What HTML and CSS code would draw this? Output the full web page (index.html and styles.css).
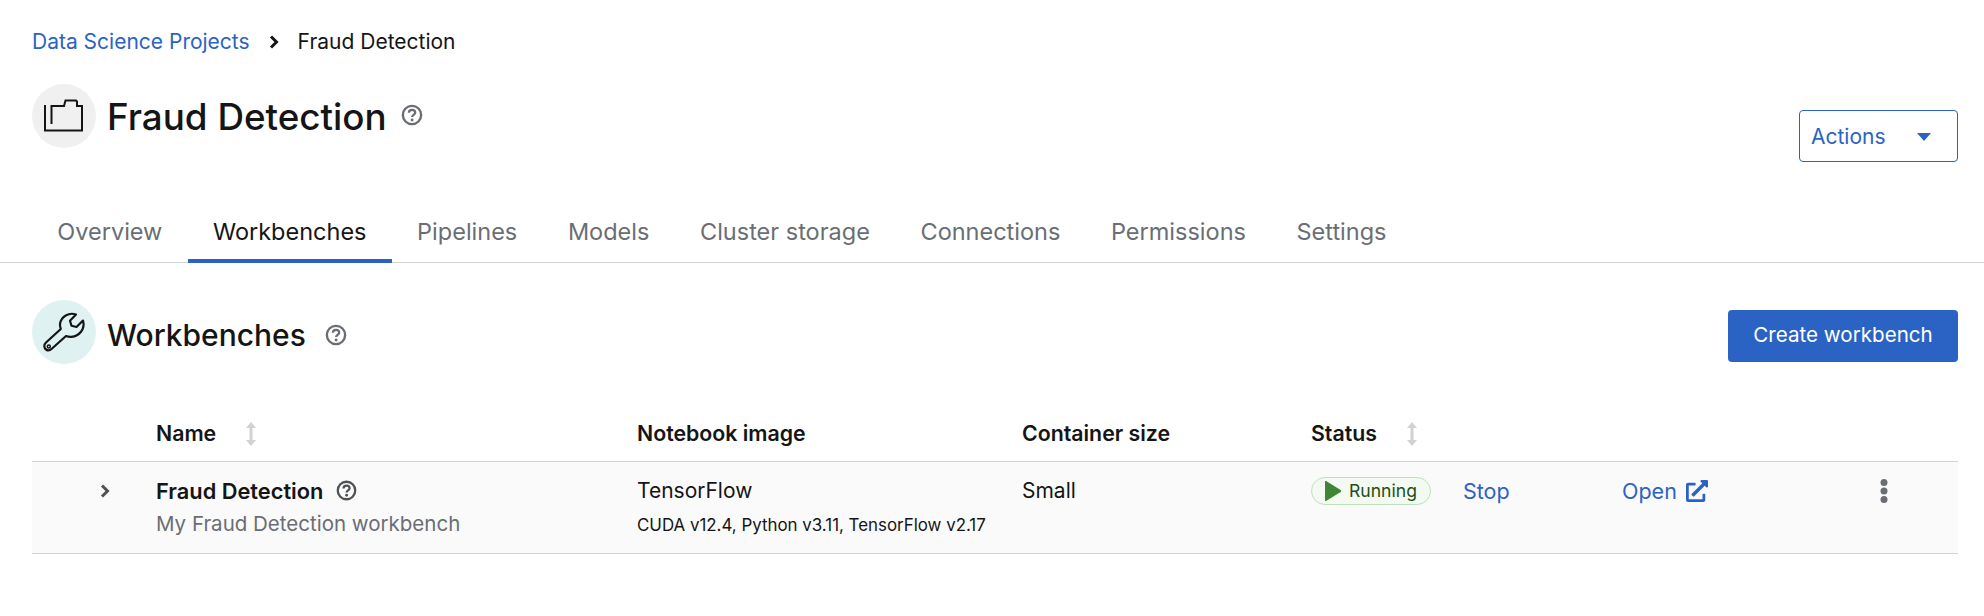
FILE: index.html
```html
<!DOCTYPE html>
<html lang="en">
<head>
<meta charset="utf-8">
<title>Fraud Detection</title>
<link rel="stylesheet" href="styles.css">
</head>
<body>
<svg class="sprite" width="0" height="0">
  <symbol id="help" viewBox="0 0 24 24"><circle cx="12" cy="12" r="10" fill="none" stroke="currentColor" stroke-width="2.6"/><path d="M8.600 9.600c0-2 1.500-3.200 3.500-3.200s3.400 1.200 3.400 2.900c0 2.600-3.400 2.600-3.400 5" fill="none" stroke="currentColor" stroke-width="2.500"/><circle cx="12.100" cy="17.400" r="1.600" fill="currentColor"/></symbol>
  <symbol id="sort" viewBox="0 0 12 24"><path d="M6 0l5 6H7.500v12H11l-5 6-5-6h3.500V6H1z" fill="currentColor"/></symbol>
  <symbol id="chev" viewBox="0 0 12 14"><path d="M3 1.500L8.500 7 3 12.500" fill="none" stroke="currentColor" stroke-width="3"/></symbol>
</svg>
<nav class="crumbs"><a class="link" href="#">Data Science Projects</a><svg class="crumb-sep"><use href="#chev"/></svg><span>Fraud Detection</span></nav>
<header class="page-head">
  <div class="title-row">
    <span class="disc disc-grey">
      <svg class="disc-icon" viewBox="0 0 64 64"><path d="M13 21V46.500H50V22H45V17.500L44 16.500H33.500L32 22H19.500V40" fill="none" stroke="#151515" stroke-width="2"/></svg>
    </span>
    <h1 class="page-title">Fraud Detection</h1>
    <svg class="help help-title"><use href="#help"/></svg>
  </div>
  <button class="btn-actions">Actions<svg class="caret" viewBox="0 0 14 8"><path d="M0 0h14L7 8z" fill="currentColor"/></svg></button>
</header>
<div class="tabs">
  <a class="tab">Overview</a><a class="tab tab-on">Workbenches</a><a class="tab">Pipelines</a><a class="tab">Models</a><a class="tab">Cluster storage</a><a class="tab">Connections</a><a class="tab">Permissions</a><a class="tab">Settings</a>
</div>
<section class="section">
  <div class="section-head">
    <div class="title-row">
      <span class="disc disc-teal">
        <svg class="disc-icon" viewBox="0 0 64 64"><path d="M44 14.500C37 12 29 16.500 28 24c-.2 1.800.2 3.500.8 5L14 42.500c-2.500 2.200-2 5.500 0 7s4 1 5.500-.5L34 36c2 .8 3.800 1 5.500.8C47 36 53.500 29.500 51 20.500L44.500 27l-5-1.300-1.500-5z" fill="none" stroke="#151515" stroke-width="2.200" stroke-linejoin="round"/><circle cx="16.800" cy="46.500" r="1.500" fill="none" stroke="#151515" stroke-width="1.500"/></svg>
      </span>
      <h2 class="section-title">Workbenches</h2>
      <svg class="help help-section"><use href="#help"/></svg>
    </div>
    <button class="btn-create">Create workbench</button>
  </div>
  <table class="grid">
    <colgroup><col class="c-exp"><col class="c-name"><col class="c-image"><col class="c-size"><col class="c-status"><col class="c-stop"><col class="c-open"><col></colgroup>
    <thead>
      <tr>
        <th></th>
        <th><span class="th-in">Name<svg class="sort"><use href="#sort"/></svg></span></th>
        <th>Notebook image</th>
        <th>Container size</th>
        <th><span class="th-in">Status<svg class="sort"><use href="#sort"/></svg></span></th>
        <th></th><th></th><th></th>
      </tr>
    </thead>
    <tbody>
      <tr>
        <td class="exp"><svg class="chev"><use href="#chev"/></svg></td>
        <td>
          <div class="wb-name">Fraud Detection<svg class="help help-row"><use href="#help"/></svg></div>
          <div class="wb-desc">My Fraud Detection workbench</div>
        </td>
        <td>
          <div>TensorFlow</div>
          <div class="img-meta">CUDA v12.4, Python v3.11, TensorFlow v2.17</div>
        </td>
        <td>Small</td>
        <td><span class="badge"><svg class="play" viewBox="0 0 16 20"><path d="M0 1v18a1 1 0 0 0 1.500.8L16 10.800a1 1 0 0 0 0-1.600L1.500.2A1 1 0 0 0 0 1z" fill="currentColor"/></svg><span class="badge-text">Running</span></span></td>
        <td><a class="link action" href="#">Stop</a></td>
        <td><a class="link action open" href="#">Open<svg class="ext" viewBox="0 0 512 512"><path fill="currentColor" d="M432 320h-32a16 16 0 0 0-16 16v112H64V128h144a16 16 0 0 0 16-16V80a16 16 0 0 0-16-16H48A48 48 0 0 0 0 112v352a48 48 0 0 0 48 48h352a48 48 0 0 0 48-48V336a16 16 0 0 0-16-16zM488 0H360c-21.370 0-32.050 25.910-17 41l35.730 35.730L135 320.370a24 24 0 0 0 0 34L157.670 377a24 24 0 0 0 34 0l243.610-243.680L471 169c15 15 41 4.500 41-17V24a24 24 0 0 0-24-24z"/></svg></a></td>
        <td class="kebab-cell"><svg class="kebab" viewBox="0 0 8 24"><circle cx="4" cy="3.500" r="3.500"/><circle cx="4" cy="12" r="3.500"/><circle cx="4" cy="20.500" r="3.500"/></svg></td>
      </tr>
    </tbody>
  </table>
</section>
</body>
</html>
```
FILE: styles.css
```css
* { box-sizing: border-box; }
html, body { margin: 0; padding: 0; }
body { font-family: "Inter", "Liberation Sans", sans-serif; font-size: 21px; line-height: 1.3; color: #151515; background: #fff; }
.sprite { position: absolute; }
.link { color: #2b63c4; text-decoration: none; }
.crumbs { display: flex; align-items: center; height: 30px; margin: 27px 0 0 32px; font-size: 21px; }
.crumb-sep { width: 12px; height: 14px; margin: 0 18px 0 18px; color: #151515; }
.page-head { display: flex; justify-content: space-between; align-items: flex-start; padding: 27px 26px 0 32px; height: 154px; }
.title-row { display: flex; align-items: center; }
.disc { display: flex; align-items: center; justify-content: center; width: 64px; height: 64px; border-radius: 50%; flex: none; }
.disc-grey { background: #f0f0f0; }
.disc-teal { background: #dff2f1; }
.disc-icon { width: 64px; height: 64px; }
.page-title { margin: 2px 0 0 11px; font-size: 36.800px; font-weight: 500; line-height: 1.2; }
.section-title { margin: 6px 0 0 11px; font-size: 30px; font-weight: 500; line-height: 1.2; }
.help { color: #6a6e73; flex: none; }
.help-title { width: 22px; height: 22px; margin: -2px 0 0 14px; }
.help-section { width: 22px; height: 22px; margin: 5px 0 0 19px; }
.help-row { width: 21px; height: 21px; margin-left: 13px; color: #4f5255; }
.btn-actions { display: flex; align-items: center; justify-content: space-between; width: 159px; height: 52px; margin-top: 26px; padding: 2px 26px 0 11px; font: inherit; color: #2b63c4; background: #fff; border: 1px solid #2b63c4; border-radius: 4px; }
.caret { width: 14px; height: 8px; }
.tabs { display: flex; height: 54px; padding-left: 32px; border-bottom: 1px solid #d2d2d2; margin-top: -2px; }
.tab { display: flex; align-items: center; padding: 0 25.300px 4px; color: #6a6e73; font-size: 23.500px; border-bottom: 4px solid transparent; margin-bottom: -1px; }
.tab-on { color: #151515; border-bottom-color: #2b63c4; }
.section { padding: 37px 26px 0 32px; }
.section-head { display: flex; justify-content: space-between; align-items: center; }
.btn-create { width: 230px; height: 52px; margin-top: 7px; font: inherit; font-size: 20.600px; color: #fff; background: #2b63c4; border: 0; border-radius: 4px; }
.grid { width: 100%; margin-top: 32px; border-collapse: collapse; table-layout: fixed; }
.c-exp { width: 124px; }
.c-name { width: 481px; }
.c-image { width: 385px; }
.c-size { width: 289px; }
.c-status { width: 152px; }
.c-stop { width: 159px; }
.c-open { width: 240px; }
th { height: 65px; padding: 11px 0 0; font-weight: 600; font-size: 21.300px; text-align: left; border-bottom: 1px solid #d2d2d2; vertical-align: middle; }
.th-in { display: flex; align-items: center; }
.sort { width: 12px; height: 24px; margin-left: 29px; color: #d2d2d2; }
td { height: 92px; padding: 14px 0 0; background: #fafafa; border-bottom: 1px solid #d2d2d2; vertical-align: top; line-height: 30px; }
.exp { padding-left: 67px; }
.chev { width: 12px; height: 14px; color: #4f5255; margin-top: 7px; }
.wb-name { display: flex; align-items: center; font-weight: 600; font-size: 21.800px; }
.wb-desc { color: #6a6e73; margin-top: 3px; font-size: 20.500px; }
.img-meta { font-size: 16.900px; margin-top: 4px; }
.badge { display: inline-flex; align-items: center; height: 28px; width: 120px; padding: 0 0 0 13px; margin-top: 1px; color: #1e4f18; background: #f3faf2; border: 1px solid #bde2b9; border-radius: 14px; font-size: 17.600px; }
.play { width: 16px; height: 20px; color: #3e8635; margin-right: 8px; flex: none; }
.action { font-size: 21.500px; }
.open { display: inline-flex; align-items: center; }
.ext { width: 22px; height: 22px; margin-left: 9px; }
.kebab-cell { padding-left: 18px; }
.kebab { display: block; width: 8px; height: 24px; fill: #6a6e73; margin-top: 3px; }
```
